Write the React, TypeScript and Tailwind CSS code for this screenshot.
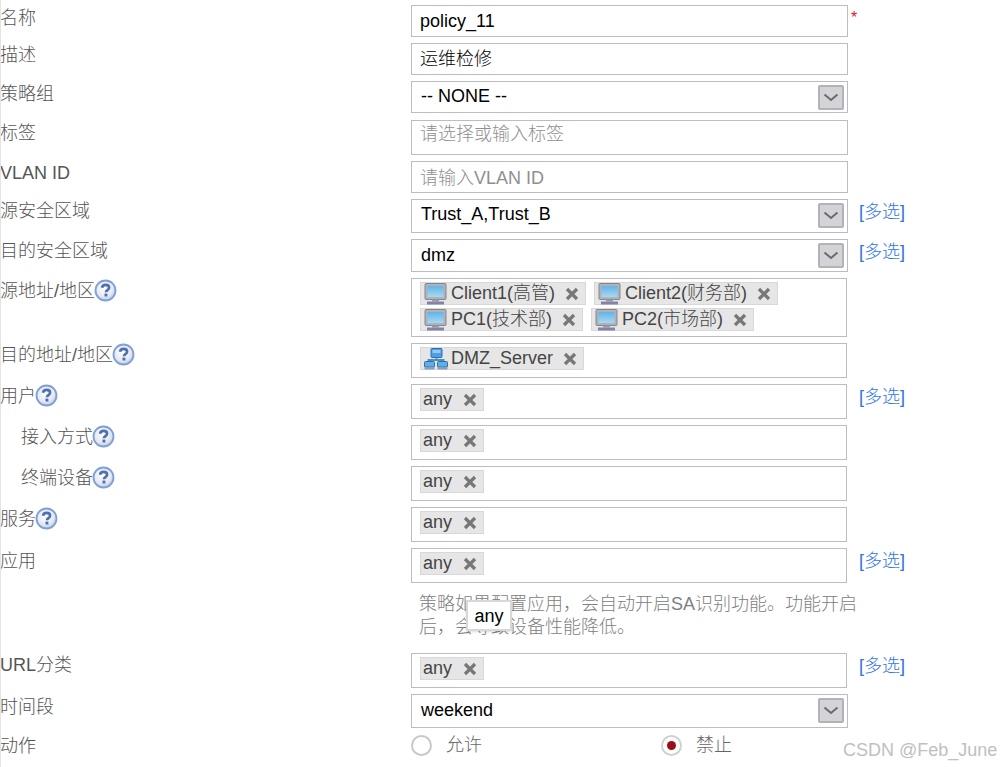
import React from "react";

const Help = ({ up = 1 }: { up?: number }) => (
  <svg width="23" height="23" viewBox="0 0 23 23" className="-ml-[1px] shrink-0" style={{ marginTop: -up }}>
    <defs>
      <radialGradient id="hg" cx="45%" cy="40%" r="65%">
        <stop offset="0%" stopColor="#ffffff" />
        <stop offset="65%" stopColor="#e3e8f2" />
        <stop offset="100%" stopColor="#aebfdc" />
      </radialGradient>
    </defs>
    <circle cx="11.5" cy="11.5" r="10" fill="url(#hg)" stroke="#7f9fd6" strokeWidth="1.8" />
    <path d="M8 8.8c.3-2 1.8-2.9 3.6-2.9 2 0 3.5 1 3.5 2.8 0 2.4-3.2 2.4-3.2 4.6" fill="none" stroke="#4f6fae" strokeWidth="2.6" />
    <rect x="10.5" y="14.6" width="2.9" height="2.9" fill="#4f6fae" />
  </svg>
);

const Monitor = () => (
  <svg width="24" height="22" viewBox="0 0 24 22" className="shrink-0">
    <defs>
      <linearGradient id="mg" x1="0" y1="0" x2="0" y2="1">
        <stop offset="0%" stopColor="#5fb4ea" />
        <stop offset="100%" stopColor="#a9d8f2" />
      </linearGradient>
    </defs>
    <rect x="1" y="0.5" width="21" height="16" rx="1" fill="#b0b2b8" stroke="#85878e" />
    <rect x="3.5" y="3" width="16" height="11" fill="url(#mg)" />
    <rect x="8" y="16.5" width="7" height="2" fill="#9a9ca3" />
    <rect x="3" y="18.5" width="17" height="3" fill="#8283a8" />
  </svg>
);

const Network = () => (
  <svg width="24" height="22" viewBox="0 0 24 22" className="shrink-0">
    <rect x="7" y="0.5" width="11" height="9" rx="1" fill="#4f9fe0" stroke="#2f6fae" />
    <rect x="8.5" y="2" width="8" height="3" fill="#8fcaf2" />
    <path d="M12.5 9.5v3M4.5 14v-2h15v2" fill="none" stroke="#4f8fc0" strokeWidth="2" />
    <rect x="0.5" y="13.5" width="10" height="5.5" rx="1" fill="#5fb0e6" stroke="#2f6fae" />
    <rect x="13.5" y="13.5" width="10" height="5.5" rx="1" fill="#5fb0e6" stroke="#2f6fae" />
    <rect x="0.5" y="19" width="10" height="2.5" fill="#8aa0b8" />
    <rect x="13.5" y="19" width="10" height="2.5" fill="#8aa0b8" />
  </svg>
);

const Tag = ({ text, icon, w, last }: { text: string; icon?: React.ReactNode; w: number; last?: boolean }) => (
  <div
    className={`relative flex h-[23px] items-center border border-[#d8d8d8] bg-[#e6e6e6] text-[18px] leading-[23px] text-[#444444] ${icon ? "pl-[3px]" : "pl-[2px]"} ${last ? "" : "mr-2"}`}
    style={{ width: w }}
  >
    {icon}
    <span className={`whitespace-nowrap ${icon ? "ml-[3px]" : ""}`}>{text}</span>
    <svg width="14" height="14" viewBox="0 0 14 14" className="absolute right-[6px] top-[4px]">
      <path d="M2 2l10 10M12 2L2 12" stroke="#777777" strokeWidth="3.2" />
    </svg>
  </div>
);

const Arrow = () => (
  <div className="absolute right-[3px] top-[3px] flex h-[25px] w-[26px] items-center justify-center rounded-[2px] border-2 border-[#b2b2b8] bg-[#d4d4d8]">
    <svg width="16" height="9" viewBox="0 0 16 9">
      <path d="M1.5 1.5L8 7l6.5-5.5" fill="none" stroke="#6a6a70" strokeWidth="2" />
    </svg>
  </div>
);

const More = ({ wide }: { wide?: boolean }) => (
  <span className={`whitespace-nowrap text-[#2f74e8] ${wide ? "ml-[12px]" : "ml-[11px]"}`}>[多选]</span>
);

const Row = ({
  label,
  help,
  h,
  mt = 6,
  lt = 0,
  indent,
  boxW = 437,
  children,
  right,
}: {
  label: string;
  help?: boolean;
  h: number;
  mt?: number;
  lt?: number;
  indent?: boolean;
  boxW?: number;
  children?: React.ReactNode;
  right?: React.ReactNode;
}) => (
  <div className="flex" style={{ marginTop: mt }}>
    <div
      className={`flex h-[26px] w-[411px] shrink-0 items-center text-[#555555] ${indent ? "pl-[21px]" : ""}`}
      style={{ marginTop: lt }}
    >
      <span className="whitespace-nowrap">{label}</span>
      {help && <Help />}
    </div>
    <div className="relative shrink-0 border border-[#bcbcc2]" style={{ width: boxW, height: h }}>
      {children}
    </div>
    {right}
  </div>
);

const TextIn = ({
  children,
  color = "text-black",
  pl = 8,
  pb = 1,
  pt = 0,
}: {
  children: React.ReactNode;
  color?: string;
  pl?: number;
  pb?: number;
  pt?: number;
}) => (
  <div
    className={`flex h-full items-center whitespace-nowrap ${color}`}
    style={{ paddingLeft: pl, paddingBottom: pb, paddingTop: pt }}
  >
    {children}
  </div>
);

const Tags = ({ children }: { children: React.ReactNode }) => (
  <div className="flex h-full flex-wrap content-start gap-y-[3px] pl-[8px] pt-[3px]">{children}</div>
);

export default function App() {
  return (
    <div
      className="relative h-[767px] w-[1001px] overflow-hidden border-l border-[#e4e4e4] bg-white text-[18px] font-light leading-[26px]"
      style={{ fontFamily: '"Liberation Sans", "Noto Sans CJK SC", sans-serif' }}
    >
      <div className="-ml-[1px] pt-[5px]">
        <Row label="名称" h={32} mt={0} right={<span className="ml-[3px] mt-[1px] text-[16px] leading-[24px] text-[#e0202a]">*</span>}>
          <TextIn>policy_11</TextIn>
        </Row>
        <Row label="描述" h={32} lt={-1}>
          <TextIn>运维检修</TextIn>
        </Row>
        <Row label="策略组" h={32}>
          <TextIn pl={9} pb={3}>-- NONE --</TextIn>
          <Arrow />
        </Row>
        <Row label="标签" h={35} mt={7}>
          <div className="pl-[8px] text-[#8f8f8f]">请选择或输入标签</div>
        </Row>
        <Row label="VLAN ID" h={32} lt={-1}>
          <TextIn color="text-[#8f8f8f]" pb={0} pt={2}>请输入VLAN ID</TextIn>
        </Row>
        <Row label="源安全区域" h={34} lt={-1} right={<More />}>
          <TextIn pl={9} pb={4}>Trust_A,Trust_B</TextIn>
          <Arrow />
        </Row>
        <Row label="目的安全区域" h={33} lt={-1} right={<More />}>
          <TextIn pl={9}>dmz</TextIn>
          <Arrow />
        </Row>
        <Row label="源地址/地区" help h={59} boxW={436}>
          <Tags>
            <Tag text="Client1(高管)" icon={<Monitor />} w={166} />
            <Tag text="Client2(财务部)" icon={<Monitor />} w={184} last />
            <Tag text="PC1(技术部)" icon={<Monitor />} w={163} />
            <Tag text="PC2(市场部)" icon={<Monitor />} w={163} last />
          </Tags>
        </Row>
        <Row label="目的地址/地区" help h={35} lt={-1} boxW={436}>
          <Tags>
            <Tag text="DMZ_Server" icon={<Network />} w={164} />
          </Tags>
        </Row>
        <Row label="用户" help h={35} lt={-1} boxW={436} right={<More wide />}>
          <Tags><Tag text="any" w={64} /></Tags>
        </Row>
        <Row label="接入方式" help indent h={35} lt={-1} boxW={436}>
          <Tags><Tag text="any" w={64} /></Tags>
        </Row>
        <Row label="终端设备" help indent h={35} lt={-1} boxW={436}>
          <Tags><Tag text="any" w={64} /></Tags>
        </Row>
        <Row label="服务" help h={35} lt={-1} boxW={436}>
          <Tags><Tag text="any" w={64} /></Tags>
        </Row>
        <Row label="应用" h={35} boxW={436} right={<More wide />}>
          <Tags><Tag text="any" w={64} /></Tags>
        </Row>
        <div className="ml-[419px] mt-[10px] h-[44px] w-[440px] leading-[23px] text-[#808080]">
          策略如果配置应用，会自动开启SA识别功能。功能开启后，会导致设备性能降低。
        </div>
        <Row label="URL分类" h={35} mt={16} lt={-1} boxW={436} right={<More wide />}>
          <Tags><Tag text="any" w={64} /></Tags>
        </Row>
        <Row label="时间段" h={34}>
          <TextIn pl={9} pb={2}>weekend</TextIn>
          <Arrow />
        </Row>
        <div className="mt-[4px] flex h-[26px] items-center text-[#555555]">
          <div className="w-[411px] shrink-0 pt-[1px]">动作</div>
          <div className="flex w-[250px] items-center">
            <span className="h-[21px] w-[21px] rounded-full border-2 border-[#c8c8c8] bg-white" />
            <span className="ml-[14px] text-[#666666]">允许</span>
          </div>
          <div className="flex items-center">
            <span className="flex h-[21px] w-[21px] items-center justify-center rounded-full border-2 border-[#d0d0d0] bg-white">
              <span className="h-[9px] w-[9px] rounded-full bg-[#a00d12]" />
            </span>
            <span className="ml-[14px] text-[#666666]">禁止</span>
          </div>
        </div>
      </div>
      <div className="absolute left-[842px] top-[737px] whitespace-nowrap text-[18px] text-[#c0c0c0]">CSDN @Feb_June</div>
      <div className="absolute left-[465px] top-[600px] flex h-[31px] w-[46px] items-center justify-center border-2 border-[#d8d8d8] bg-white font-normal text-black shadow-sm">
        any
      </div>
    </div>
  );
}
